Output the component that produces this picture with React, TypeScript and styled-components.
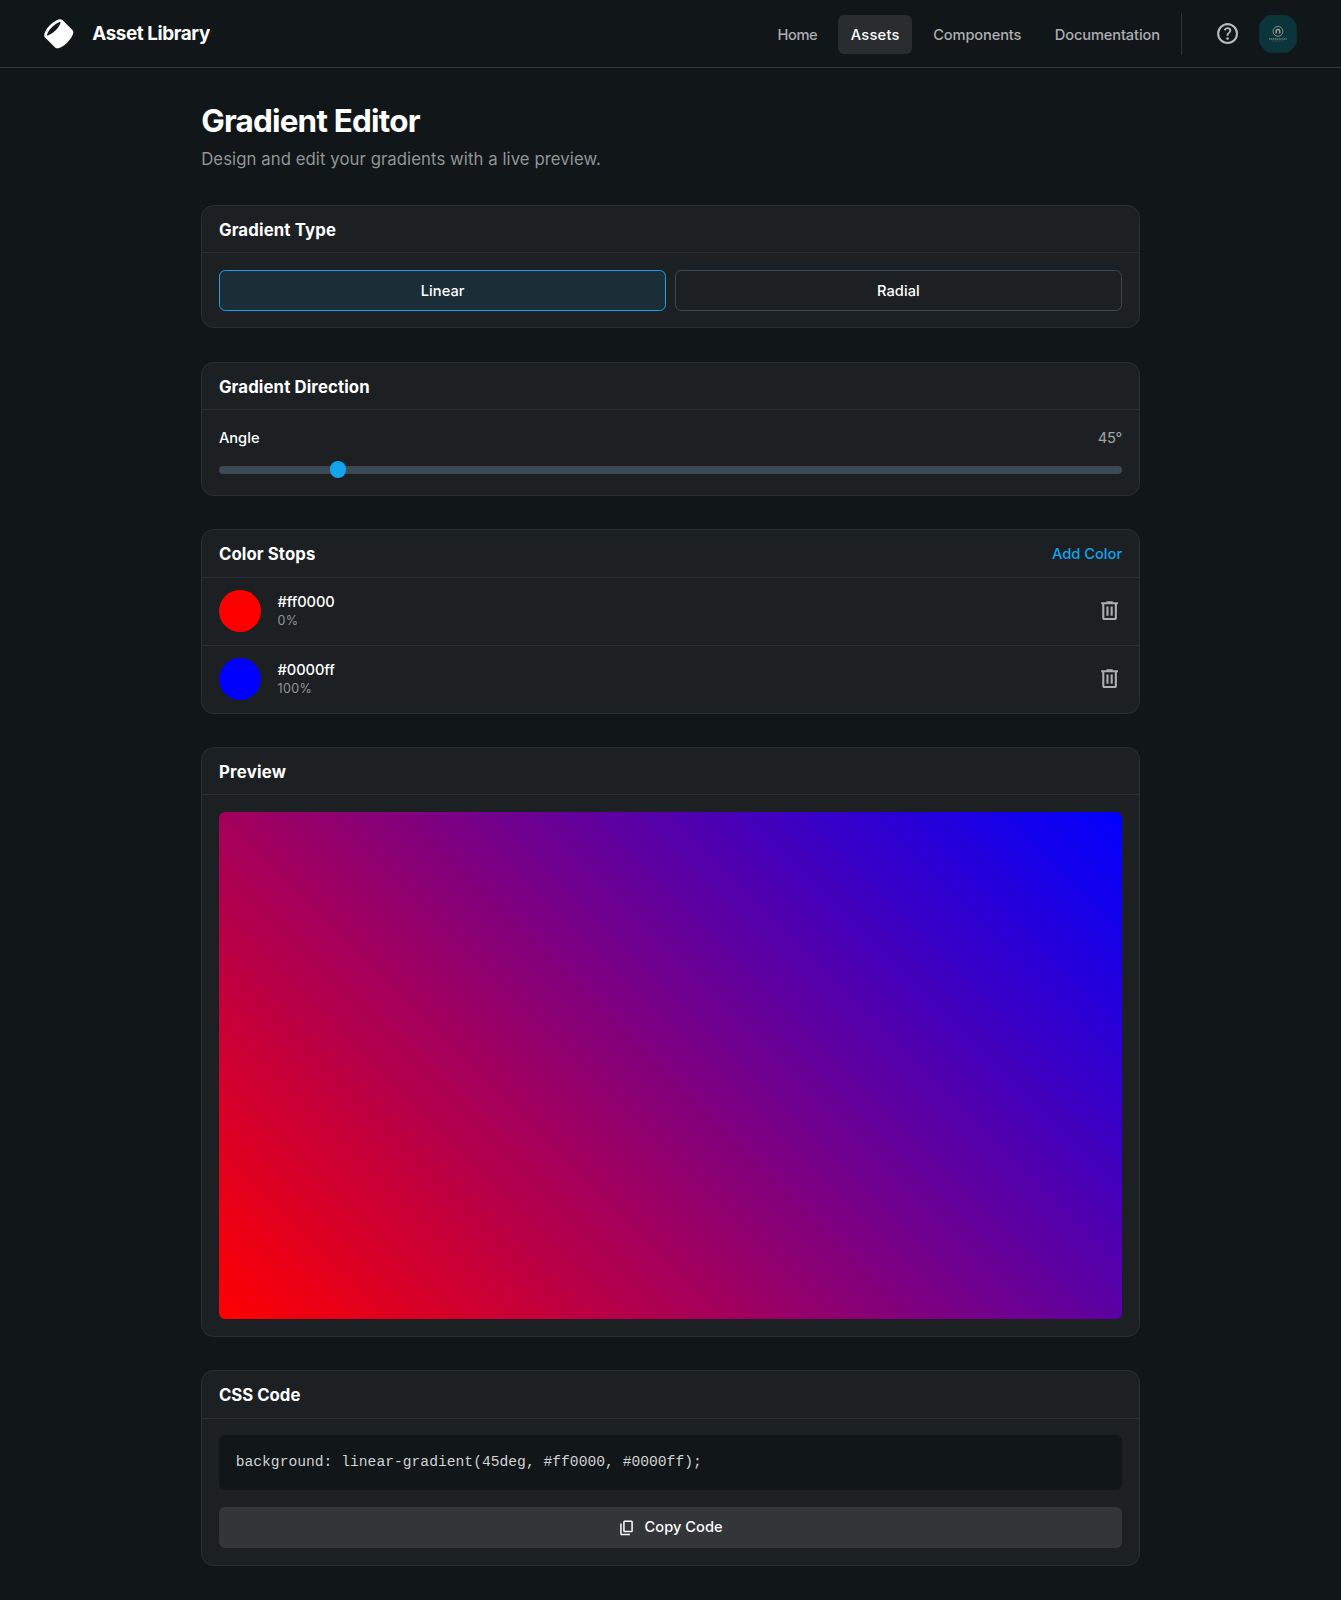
import React, { useState } from "react";
import styled, { createGlobalStyle } from "styled-components";

const primary = "#13a4ec";
const line = "#283034";

const GlobalStyle = createGlobalStyle`
  *, *::before, *::after { box-sizing: border-box; }
  html { font-size: 16.7625px; background: #111618; }
  body {
    margin: 0;
    background: #111618;
    color: #fff;
    font-family: Inter, "Noto Sans", sans-serif;
    line-height: 1.5;
  }
  h1, h2, p, pre { margin: 0; }
  button { font: inherit; color: inherit; background: none; border: 0; padding: 0; cursor: pointer; }
`;

const Header = styled.header`
  display: flex;
  align-items: center;
  justify-content: space-between;
  height: 4.0625rem;
  padding: 0 2.5rem;
  border-bottom: 1px solid #303437;
`;

const Brand = styled.div`
  display: flex;
  align-items: center;
  gap: 1rem;
  svg { width: 2rem; height: 2rem; }
`;

const BrandName = styled.h2`
  font-size: 1.125rem;
  font-weight: 700;
  line-height: 1.25;
  letter-spacing: -0.021em;
`;

const Nav = styled.nav`
  display: flex;
  align-items: center;
  gap: 0.5rem;
`;

const NavLink = styled.a<{ $active?: boolean; $tracking: number }>`
  margin-top: 1.2px;
  padding: 9.2px 0.75rem 7.6px;
  border-radius: 0.375rem;
  font-size: 0.875rem;
  font-weight: 500;
  line-height: 1.5;
  letter-spacing: ${(p) => p.$tracking}px;
  text-decoration: none;
  color: ${(p) => (p.$active ? "#fff" : "#acaeaf")};
  background: ${(p) => (p.$active ? "#292d2f" : "transparent")};
`;

const Account = styled.div`
  display: flex;
  align-items: center;
  gap: 0.5rem;
  height: 2.5rem;
  padding-left: 1.5rem;
  border-left: 1px solid #303437;
`;

const RoundButton = styled.button`
  display: flex;
  align-items: center;
  justify-content: center;
  width: 2.5rem;
  height: 2.5rem;
  color: #b9bbbc;
  svg { width: 1.5rem; height: 1.5rem; }
`;

const Avatar = styled.div`
  width: 2.5rem;
  height: 2.5rem;
  svg { display: block; width: 100%; height: 100%; }
`;

const Main = styled.main`
  display: flex;
  flex-direction: column;
  gap: 2rem;
  width: 56rem;
  margin: 0 auto;
  padding: 2rem 0 1.75rem;
`;

const Title = styled.h1`
  font-size: 1.875rem;
  font-weight: 700;
  line-height: 1.25;
  letter-spacing: -0.025em;
`;

const Subtitle = styled.p`
  margin-top: 6.9px;
  font-size: 1rem;
  line-height: 23.6px;
  letter-spacing: 0.06px;
  color: #929596;
`;

const Card = styled.section`
  border: 1px solid ${line};
  border-radius: 0.75rem;
  background: #1c2023;
  overflow: hidden;
`;

const CardHeader = styled.div`
  display: flex;
  align-items: center;
  justify-content: space-between;
  height: 2.8125rem;
  padding: 2px 1rem 0;
  border-bottom: 1px solid ${line};
`;

const CardTitle = styled.h2<{ $tracking?: number }>`
  font-size: 1rem;
  font-weight: 700;
  line-height: 1.25;
  letter-spacing: ${(p) => p.$tracking ?? 0}px;
`;

const CardBody = styled.div<{ $gap?: string }>`
  display: flex;
  flex-direction: column;
  gap: ${(p) => p.$gap ?? "0"};
  padding: 1rem;
`;

const Choices = styled.div`
  display: grid;
  grid-template-columns: 1fr 1fr;
  gap: 0.5rem;
`;

const Choice = styled.button<{ $selected: boolean }>`
  height: 2.4375rem;
  padding-top: 1px;
  border: 1px solid ${(p) => (p.$selected ? primary : "#3b4a54")};
  border-radius: 0.375rem;
  background: ${(p) => (p.$selected ? "#1b2d37" : "transparent")};
  font-size: 0.875rem;
  font-weight: 500;
  letter-spacing: 0.05px;
`;

const AngleRow = styled.div`
  display: flex;
  justify-content: space-between;
  font-size: 0.875rem;
  font-weight: 500;
  line-height: 1.5;
`;

const AngleValue = styled.span`
  font-weight: 400;
  letter-spacing: -0.2px;
  color: #a4a6a7;
`;

const Slider = styled.input`
  appearance: none;
  display: block;
  width: 100%;
  height: 1rem;
  margin: 0;
  background: transparent;
  &::-webkit-slider-runnable-track {
    height: 0.5rem;
    border-radius: 0.25rem;
    background: #3b4a54;
  }
  &::-webkit-slider-thumb {
    appearance: none;
    width: 1rem;
    height: 1rem;
    margin-top: -0.25rem;
    border-radius: 50%;
    background: ${primary};
  }
`;

const AddButton = styled.button`
  font-size: 0.875rem;
  font-weight: 500;
  color: ${primary};
`;

const StopRow = styled.div`
  display: flex;
  align-items: center;
  gap: 1rem;
  padding: 0.75rem 1rem;
  & + & { border-top: 1px solid ${line}; }
`;

const Swatch = styled.div<{ $color: string }>`
  width: 2.5rem;
  height: 2.5rem;
  border-radius: 50%;
  background: ${(p) => p.$color};
`;

const StopText = styled.div`
  flex: 1;
`;

const StopHex = styled.p`
  font-size: 0.875rem;
  font-weight: 500;
  line-height: 1.25rem;
  letter-spacing: -0.1px;
`;

const StopPosition = styled.p`
  font-size: 0.75rem;
  line-height: 1rem;
  letter-spacing: 0.35px;
  color: #929596;
`;

const DeleteButton = styled.button`
  color: #acaeaf;
  svg { display: block; width: 1.5rem; height: 1.5rem; }
`;

const Preview = styled.div`
  height: 507.2px;
  border-radius: 0.375rem;
`;

const Code = styled.pre`
  padding: 1rem;
  border-radius: 0.375rem;
  background: #111618;
  color: #d1d2d2;
  font-family: "Liberation Mono", monospace;
  font-size: 0.875rem;
  line-height: 1.25rem;
`;

const CopyButton = styled.button`
  display: flex;
  align-items: center;
  justify-content: center;
  gap: 0.5rem;
  height: 2.5rem;
  border-radius: 0.375rem;
  background: #323639;
  font-size: 0.875rem;
  font-weight: 500;
  svg { width: 1.0625rem; height: 1.0625rem; }
`;

const Symbol = ({ d }: { d: string }) => (
  <svg viewBox="0 -960 960 960" fill="currentColor" aria-hidden="true">
    <path d={d} />
  </svg>
);

const HELP =
  "M478-240q21 0 35.500-14.500T528-290q0-21-14.500-35.500T478-340q-21 0-35.500 14.500T428-290q0 21 14.500 35.500T478-240Zm-36-154h74q0-33 7.500-52t42.500-52q26-26 41-49.500t15-56.500q0-56-41-86t-97-30q-57 0-92.500 30T342-618l66 26q5-18 22.500-39t53.500-21q32 0 48 17.500t16 38.500q0 20-12 37.500T506-526q-44 39-54 59t-10 73Zm38 314q-83 0-156-31.500T197-197q-54-54-85.500-127T80-480q0-83 31.500-156T197-763q54-54 127-85.500T480-880q83 0 156 31.500T763-763q54 54 85.500 127T880-480q0 83-31.500 156T763-197q-54 54-127 85.500T480-80Zm0-80q134 0 227-93t93-227q0-134-93-227t-227-93q-134 0-227 93t-93 227q0 134 93 227t227 93Z";
const DELETE =
  "M280-120q-33 0-56.500-23.500T200-200v-520h-40v-80h200v-40h240v40h200v80h-40v520q0 33-23.500 56.500T680-120H280Zm400-600H280v520h400v-520ZM360-280h80v-360h-80v360Zm160 0h80v-360h-80v360Z";
const COPY =
  "M360-240q-33 0-56.500-23.500T280-320v-480q0-33 23.500-56.500T360-880h360q33 0 56.500 23.500T800-800v480q0 33-23.500 56.500T720-240H360Zm0-80h360v-480H360v480ZM200-80q-33 0-56.500-23.500T120-160v-560h80v560h440v80H200Z";

const Logo = () => (
  <svg viewBox="0 0 48 48" fill="#fff" aria-hidden="true">
    <path
      transform="rotate(180 24 24)"
      fillRule="evenodd"
      clipRule="evenodd"
      d="M39.475 21.6262C40.358 21.4363 40.6863 21.5589 40.7581 21.5934C40.7876 21.655 40.8547 21.857 40.8082 22.3336C40.7408 23.0255 40.4502 24.0046 39.8572 25.2301C38.6799 27.6631 36.5085 30.6631 33.5858 33.5858C30.6631 36.5085 27.6632 38.6799 25.2301 39.8572C24.0046 40.4502 23.0255 40.7407 22.3336 40.8082C21.8571 40.8547 21.6551 40.7875 21.5934 40.7581C21.5589 40.6863 21.4363 40.358 21.6262 39.475C21.8562 38.4054 22.4689 36.9657 23.5038 35.2817C24.7575 33.2417 26.5497 30.9744 28.7621 28.762C30.9744 26.5497 33.2417 24.7574 35.2817 23.5037C36.9657 22.4689 38.4054 21.8562 39.475 21.6262ZM4.41189 29.2403L18.7597 43.5881C19.8813 44.7097 21.4027 44.9179 22.7217 44.7893C24.0585 44.659 25.5148 44.1631 26.9723 43.4579C29.9052 42.0387 33.2618 39.5667 36.4142 36.4142C39.5667 33.2618 42.0387 29.9052 43.4579 26.9723C44.1631 25.5148 44.659 24.0585 44.7893 22.7217C44.9179 21.4027 44.7097 19.8813 43.5881 18.7597L29.2403 4.41187C27.8527 3.02428 25.8765 3.02573 24.2861 3.36776C22.6081 3.72863 20.7334 4.58419 18.8396 5.74801C16.4978 7.18716 13.9881 9.18353 11.5858 11.5858C9.18354 13.988 7.18717 16.4978 5.74802 18.8396C4.58421 20.7334 3.72865 22.6081 3.36778 24.2861C3.02574 25.8765 3.02429 27.8527 4.41189 29.2403Z"
    />
  </svg>
);

const AvatarArt = () => (
  <svg viewBox="0 0 40 40" fill="none" aria-hidden="true">
    <path
      fill="#0c353b"
      d="M12.500 2h15C31 2 38 9 38 13v14c0 4-7 11-10.500 11h-15C9 38 2 31 2 27V13C2 9 9 2 12.500 2Z"
    />
    <circle cx="20" cy="17.500" r="4.700" stroke="#9c9f90" strokeWidth="0.800" />
    <path d="M18.300 19.600v-2.600q0-1.300 1.700-1.300t1.700 1.300v2.600" stroke="#a5a493" strokeWidth="1.300" />
    <path d="M11.500 24.800h17" stroke="#8f978d" strokeWidth="1.100" strokeDasharray="1.300 0.500" />
    <path d="M14.500 26.700h11" stroke="#48666a" strokeWidth="0.600" strokeDasharray="0.900 0.400" />
  </svg>
);

const NAV = [
  { label: "Home", tracking: -0.4 },
  { label: "Assets", tracking: 0.25 },
  { label: "Components", tracking: -0.15 },
  { label: "Documentation", tracking: -0.14 },
];

export default function App() {
  const [type, setType] = useState("Linear");
  const [angle, setAngle] = useState(45);
  const stops = [
    { color: "#ff0000", position: "0%" },
    { color: "#0000ff", position: "100%" },
  ];
  const colors = stops.map((s) => s.color).join(", ");
  const gradient =
    type === "Linear" ? `linear-gradient(${angle}deg, ${colors})` : `radial-gradient(circle, ${colors})`;

  return (
    <>
      <GlobalStyle />
      <Header>
        <Brand>
          <Logo />
          <BrandName>Asset Library</BrandName>
        </Brand>
        <Nav>
          {NAV.map((item) => (
            <NavLink key={item.label} $active={item.label === "Assets"} $tracking={item.tracking}>
              {item.label}
            </NavLink>
          ))}
          <Account>
            <RoundButton>
              <Symbol d={HELP} />
            </RoundButton>
            <Avatar>
              <AvatarArt />
            </Avatar>
          </Account>
        </Nav>
      </Header>
      <Main>
        <div>
          <Title>Gradient Editor</Title>
          <Subtitle>Design and edit your gradients with a live preview.</Subtitle>
        </div>

        <Card>
          <CardHeader>
            <CardTitle $tracking={0.15}>Gradient Type</CardTitle>
          </CardHeader>
          <CardBody>
            <Choices>
              {["Linear", "Radial"].map((name) => (
                <Choice key={name} $selected={type === name} onClick={() => setType(name)}>
                  {name}
                </Choice>
              ))}
            </Choices>
          </CardBody>
        </Card>

        <Card>
          <CardHeader>
            <CardTitle $tracking={0.12}>Gradient Direction</CardTitle>
          </CardHeader>
          <CardBody $gap="0.75rem">
            <AngleRow>
              <span>Angle</span>
              <AngleValue>{angle}°</AngleValue>
            </AngleRow>
            <Slider
              type="range"
              min={0}
              max={360}
              value={angle}
              onChange={(e) => setAngle(Number(e.target.value))}
            />
          </CardBody>
        </Card>

        <Card>
          <CardHeader>
            <CardTitle $tracking={0.1}>Color Stops</CardTitle>
            <AddButton>Add Color</AddButton>
          </CardHeader>
          {stops.map((stop) => (
            <StopRow key={stop.color}>
              <Swatch $color={stop.color} />
              <StopText>
                <StopHex>{stop.color}</StopHex>
                <StopPosition>{stop.position}</StopPosition>
              </StopText>
              <DeleteButton>
                <Symbol d={DELETE} />
              </DeleteButton>
            </StopRow>
          ))}
        </Card>

        <Card>
          <CardHeader>
            <CardTitle $tracking={0.27}>Preview</CardTitle>
          </CardHeader>
          <CardBody>
            <Preview style={{ backgroundImage: gradient }} />
          </CardBody>
        </Card>

        <Card>
          <CardHeader>
            <CardTitle>CSS Code</CardTitle>
          </CardHeader>
          <CardBody $gap="1rem">
            <Code>{`background: ${gradient};`}</Code>
            <CopyButton>
              <Symbol d={COPY} />
              Copy Code
            </CopyButton>
          </CardBody>
        </Card>
      </Main>
    </>
  );
}
